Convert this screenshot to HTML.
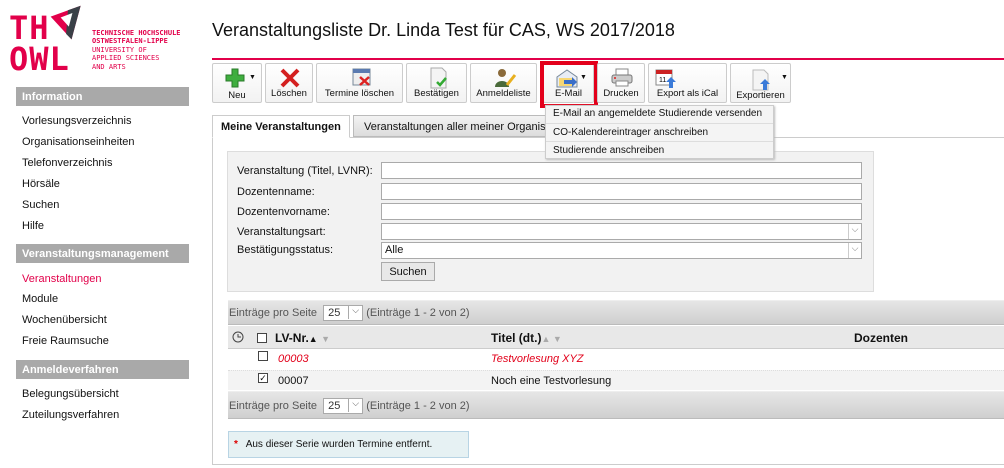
<!DOCTYPE html>
<html><head><meta charset="utf-8"><style>
*{margin:0;padding:0;box-sizing:border-box}
body{width:1004px;height:468px;overflow:hidden;background:#fff;font-family:"Liberation Sans","DejaVu Sans",sans-serif;font-size:11px;color:#111;position:relative}
.a{position:absolute;white-space:nowrap}
.hd{position:absolute;left:16px;width:173px;height:19px;background:#a9a9a9;color:#fff;font-weight:bold;font-size:11px;padding:4px 0 0 6px}
.lk{position:absolute;left:22px;font-size:11px}
.btn{position:absolute;top:63px;height:40px;border:1px solid #ccc;border-radius:2px;background:linear-gradient(#fff,#f2f2f2);font-size:9.5px;text-align:center}
.btn span{position:absolute;left:0;right:0;bottom:3px}
.inp{position:absolute;left:381px;width:481px;height:17px;border:1px solid #aaa;background:#fff}
.lb{position:absolute;left:237px;font-size:11px}
.bar{position:absolute;left:228px;right:0;background:linear-gradient(#e6e6e6,#cfcfcf);border-top:1px solid #eee;border-bottom:1px solid #bbb}
.sel{display:inline-block;width:40px;height:16px;border:1px solid #aaa;background:#fff;vertical-align:middle;position:relative;font-size:11px;padding:1px 0 0 4px;color:#333}
.sel:after{content:"⌵";position:absolute;right:0;top:-1px;width:13px;height:14px;border-left:1px solid #aaa;font-size:9px;text-align:center;color:#555}
.cb{position:absolute;width:10px;height:10px;border:1px solid #444;background:#fff}
</style></head><body>
<!-- logo -->
<div class="a" style="left:9px;top:13px;font-size:32px;font-weight:bold;color:#e2004a;letter-spacing:1px;line-height:31px;font-family:'DejaVu Sans Mono',monospace">TH<br>OWL</div>
<svg class="a" style="left:47px;top:3px" width="40" height="40" viewBox="0 0 42 44"><polygon points="3,15 36,3 26,40" fill="#e2004a"/><polygon points="22,8 36,3 26,40 20,34" fill="#3a4047"/><polygon points="14,16 27,11 23,26" fill="#fff"/></svg>
<div class="a" style="left:92px;top:29px;font-size:7px;line-height:8.4px;color:#e2004a;font-family:'DejaVu Sans Mono',monospace"><b>TECHNISCHE HOCHSCHULE<br>OSTWESTFALEN-LIPPE</b><br>UNIVERSITY OF<br>APPLIED SCIENCES<br>AND ARTS</div>
<!-- sidebar -->
<div class="hd" style="top:87px">Information</div>
<div class="lk" style="top:115px">Vorlesungsverzeichnis</div>
<div class="lk" style="top:136px">Organisationseinheiten</div>
<div class="lk" style="top:157px">Telefonverzeichnis</div>
<div class="lk" style="top:178px">Hörsäle</div>
<div class="lk" style="top:199px">Suchen</div>
<div class="lk" style="top:220px">Hilfe</div>
<div class="hd" style="top:244px">Veranstaltungsmanagement</div>
<div class="lk" style="top:273px;color:#e2004a">Veranstaltungen</div>
<div class="lk" style="top:293px">Module</div>
<div class="lk" style="top:314px">Wochenübersicht</div>
<div class="lk" style="top:335px">Freie Raumsuche</div>
<div class="hd" style="top:360px">Anmeldeverfahren</div>
<div class="lk" style="top:388px">Belegungsübersicht</div>
<div class="lk" style="top:409px">Zuteilungsverfahren</div>
<!-- title -->
<div class="a" style="left:212px;top:20px;font-size:18px;color:#111">Veranstaltungsliste Dr. Linda Test für CAS, WS 2017/2018</div>
<div class="a" style="left:212px;top:58px;width:792px;height:2px;background:#e2004a"></div>
<!-- toolbar -->
<div class="btn" style="left:212px;width:50px"><svg class="a" style="left:12px;top:4px" width="20" height="20"><path d="M7 1h6v6h6v6h-6v6H7v-6H1V7h6z" fill="#3fae3f" stroke="#2a7a2a"/></svg><span style="bottom:1px">Neu</span><div class="a" style="left:36px;top:10px;font-size:7px">▼</div></div>
<div class="btn" style="left:265px;width:48px"><svg class="a" style="left:13px;top:3px" width="22" height="22"><path d="M3 3L19 19M19 3L3 19" stroke="#d42020" stroke-width="4"/></svg><span>Löschen</span></div>
<div class="btn" style="left:316px;width:87px"><svg class="a" style="left:35px;top:3px" width="20" height="20"><rect x="1" y="2" width="17" height="16" fill="#eee" stroke="#789"/><rect x="1" y="2" width="17" height="4" fill="#5a7ab0"/><path d="M8 10l9 8M17 10l-9 8" stroke="#d22" stroke-width="2.5"/></svg><span>Termine löschen</span></div>
<div class="btn" style="left:406px;width:61px"><svg class="a" style="left:22px;top:3px" width="20" height="22"><path d="M2 1h11l4 4v16H2z" fill="#f4f4f4" stroke="#aaa"/><path d="M8 15l3 3 6-7" stroke="#3a3" stroke-width="2.5" fill="none"/></svg><span>Bestätigen</span></div>
<div class="btn" style="left:470px;width:67px"><svg class="a" style="left:22px;top:3px" width="24" height="22"><circle cx="9" cy="6" r="4" fill="#8a6a3a"/><path d="M2 20c0-8 14-8 14 0z" fill="#4a6a3a"/><path d="M14 18l8-10" stroke="#e8b020" stroke-width="3"/></svg><span>Anmeldeliste</span></div>
<div class="btn" style="left:543px;width:51px"><svg class="a" style="left:12px;top:5px" width="22" height="20"><path d="M1 8l10-7 10 7v10H1z" fill="#e8edf5" stroke="#789"/><path d="M3 9h13l3 4-3 4H3z" fill="#f7d774"/><path d="M8 11h8v-3l5 5-5 5v-3H8z" fill="#3a6ec8"/></svg><span>E-Mail</span><div class="a" style="left:36px;top:10px;font-size:7px">▼</div></div>
<div class="a" style="left:540px;top:61px;width:58px;height:47px;border:4px solid #e3001b"></div>
<div class="btn" style="left:597px;width:48px"><svg class="a" style="left:13px;top:4px" width="22" height="20"><rect x="5" y="1" width="12" height="7" fill="#fff" stroke="#888"/><rect x="1" y="7" width="20" height="8" rx="2" fill="#ccc" stroke="#777"/><rect x="5" y="13" width="12" height="5" fill="#fff" stroke="#888"/><circle cx="4" cy="10" r="1" fill="#d22"/></svg><span>Drucken</span></div>
<div class="btn" style="left:648px;width:79px"><svg class="a" style="left:6px;top:3px" width="24" height="22"><rect x="1" y="3" width="16" height="15" fill="#fff" stroke="#888"/><rect x="1" y="3" width="16" height="4" fill="#c22"/><text x="4" y="15" font-size="7" font-family="Liberation Sans">11</text><path d="M16 10l5 5h-3v6h-4v-6h-3z" fill="#3a7ad8"/></svg><span>Export als iCal</span></div>
<div class="btn" style="left:730px;width:61px"><svg class="a" style="left:20px;top:5px" width="22" height="22"><path d="M2 1h11l4 4v16H2z" fill="#f4f4f4" stroke="#bbb"/><path d="M14 10l5 5h-3v6h-4v-6h-3z" fill="#3a7ad8"/></svg><span style="bottom:1px">Exportieren</span><div class="a" style="left:50px;top:10px;font-size:7px">▼</div></div>
<!-- tabs -->
<div class="a" style="left:212px;top:137px;width:792px;height:328px;border:1px solid #ccc;border-right:none"></div>
<div class="a" style="left:212px;top:115px;width:138px;height:23px;border:1px solid #ccc;border-bottom:1px solid #fff;background:#fff;font-weight:bold;padding:5px 0 0 8px">Meine Veranstaltungen</div>
<div class="a" style="left:353px;top:115px;width:200px;height:22px;border:1px solid #bbb;background:linear-gradient(#f3f3f3,#dcdcdc);padding:5px 0 0 10px;overflow:hidden">Veranstaltungen aller meiner Organisationen</div>
<!-- dropdown -->
<div class="a" style="left:545px;top:105px;width:229px;height:54px;background:#f4f4f4;border:1px solid #ccc;box-shadow:1px 1px 2px #bbb;font-size:10px;z-index:5">
<div style="height:18px;padding:2px 0 0 7px;border-bottom:1px solid #ddd">E-Mail an angemeldete Studierende versenden</div>
<div style="height:18px;padding:3px 0 0 7px;border-bottom:1px solid #ddd">CO-Kalendereintrager anschreiben</div>
<div style="padding:3px 0 0 7px">Studierende anschreiben</div></div>
<!-- form -->
<div class="a" style="left:227px;top:151px;width:647px;height:141px;background:#f2f2f2;border:1px solid #ddd"></div>
<div class="lb" style="top:165px">Veranstaltung (Titel, LVNR):</div><div class="inp" style="top:162px"></div>
<div class="lb" style="top:186px">Dozentenname:</div><div class="inp" style="top:183px"></div>
<div class="lb" style="top:206px">Dozentenvorname:</div><div class="inp" style="top:203px"></div>
<div class="lb" style="top:226px">Veranstaltungsart:</div><div class="inp" style="top:223px"></div><div class="a" style="left:848px;top:224px;width:13px;height:15px;border-left:1px solid #ccc;font-size:9px;color:#777;text-align:center">⌵</div>
<div class="lb" style="top:244px">Bestätigungsstatus:</div><div class="inp" style="top:242px;padding:1px 0 0 3px">Alle</div><div class="a" style="left:848px;top:243px;width:13px;height:15px;border-left:1px solid #ccc;font-size:9px;color:#777;text-align:center">⌵</div>
<div class="a" style="left:381px;top:262px;width:54px;height:19px;border:1px solid #aaa;background:#e8e8e8;text-align:center;padding-top:3px">Suchen</div>
<!-- table -->
<div class="bar" style="top:300px;height:25px"></div>
<div class="a" style="left:229px;top:305px;color:#555">Einträge pro Seite &nbsp;<span class="sel">25</span> (Einträge 1 - 2 von 2)</div>
<div class="a" style="left:228px;top:326px;width:776px;height:23px;background:#e8e8e8;border-bottom:1px solid #ccc"></div>
<svg class="a" style="left:232px;top:331px" width="12" height="12"><circle cx="6" cy="6" r="5" fill="none" stroke="#444"/><path d="M6 3v3h3" stroke="#444" fill="none"/></svg>
<div class="cb" style="left:257px;top:333px"></div>
<div class="a" style="left:275px;top:331px;font-weight:bold;font-size:12px">LV-Nr.<span style="font-size:9px">▲</span> <span style="font-size:9px;color:#aaa">▼</span></div>
<div class="a" style="left:491px;top:331px;font-weight:bold;font-size:12px">Titel (dt.)<span style="font-size:9px;color:#aaa">▲ ▼</span></div>
<div class="a" style="left:854px;top:331px;font-weight:bold;font-size:12px">Dozenten</div>
<div class="a" style="left:228px;top:370px;width:776px;height:20px;background:#f3f3f3;border-top:1px dotted #ddd"></div>
<div class="cb" style="left:258px;top:351px"></div>
<div class="a" style="left:278px;top:353px;color:#e2001a;font-style:italic">00003</div>
<div class="a" style="left:491px;top:353px;color:#e2001a;font-style:italic">Testvorlesung XYZ</div>
<div class="cb" style="left:258px;top:373px;font-size:9px;line-height:8px;text-align:center">✓</div>
<div class="a" style="left:278px;top:375px">00007</div>
<div class="a" style="left:491px;top:375px">Noch eine Testvorlesung</div>
<div class="bar" style="top:391px;height:28px"></div>
<div class="a" style="left:229px;top:398px;color:#555">Einträge pro Seite &nbsp;<span class="sel">25</span> (Einträge 1 - 2 von 2)</div>
<div class="a" style="left:228px;top:431px;width:241px;height:27px;background:#e6f1f3;border:1px solid #b8d4e4;font-size:10px;padding:7px 0 0 5px"><span style="color:#d00;font-weight:bold">*</span>&nbsp;&nbsp; Aus dieser Serie wurden Termine entfernt.</div>
</body></html>
